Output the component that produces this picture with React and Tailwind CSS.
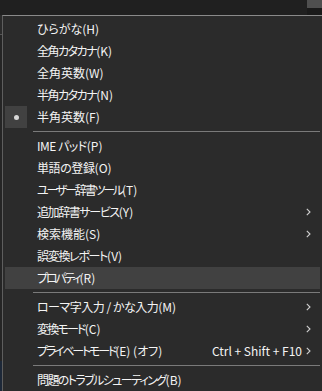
import React from "react";

const Chevron = () => (
  <svg width="5" height="8" viewBox="0 0 5 8" className="shrink-0">
    <polyline points="0.8,0.8 4,4 0.8,7.2" fill="none" stroke="#d0d0d0" strokeWidth="1.1" />
  </svg>
);

function Item({ label, sub, shortcut, active, checked, tight = "" }) {
  const i = label.indexOf("(");
  const head = label.slice(0, i);
  const tail = label.slice(i);
  return (
    <div className={"h-[22px] flex items-center relative " + (active ? "bg-[#414141]" : "")}>
      {checked && (
        <div className="absolute left-0 top-0 w-[22px] h-[22px] bg-[#414141] flex items-center justify-center">
          <div className="w-[5px] h-[5px] rounded-full bg-[#d8d8d8]" />
        </div>
      )}
      <span className="pl-[32px] flex-1 whitespace-nowrap">
        <span className={tight}>{head}</span>
        {tail}
      </span>
      {shortcut && <span className="mr-[4px] whitespace-nowrap">{shortcut}</span>}
      {sub && <Chevron />}
      <span className="w-[9px] shrink-0" />
    </div>
  );
}

const Sep = () => (
  <div className="h-[7px] flex items-center pl-[28px]">
    <div className="h-px w-full bg-[#7a7a7a]" />
  </div>
);

export default function App() {
  return (
    <div className="w-[322px] h-[391px] bg-[#202020] overflow-hidden flex flex-col font-['Noto_Sans_CJK_JP',sans-serif] text-[12px] text-[#f4f4f4] [font-feature-settings:'palt']">
      <div className="h-[15px] flex shrink-0">
        <div className="flex-1" />
        <div className="w-[15px] flex flex-col">
          <div className="h-[8px] bg-[#4f4f4f]" />
          <div className="flex-1 bg-[#1a1a1a]" />
        </div>
      </div>
      <div className="flex flex-1">
        <div className="w-[2px] flex flex-col">
          <div className="h-[19px] bg-[#2b2b2b]" />
          <div className="h-px bg-[#555]" />
          <div className="flex-1 bg-[#252525]" />
          <div className="h-[30px] bg-[#1d2838]" />
        </div>
        <div className="flex-1 bg-[#2b2b2b] border-l border-t border-l-[#5e5e5e] border-t-[#8a8a8a] pl-[2px] pr-[2px] pt-[2px]">
          <Item label="ひらがな(H)" />
          <Item label="全角カタカナ(K)" tight="tracking-[-1.5px]" />
          <Item label="全角英数(W)" />
          <Item label="半角カタカナ(N)" tight="tracking-[-1.5px]" />
          <Item label="半角英数(F)" checked />
          <Sep />
          <Item label="IME パッド(P)" tight="tracking-[-0.5px]" />
          <Item label="単語の登録(O)" tight="tracking-[-0.4px]" />
          <Item label="ユーザー辞書ツール(T)" tight="tracking-[-2.2px]" />
          <Item label="追加辞書サービス(Y)" sub tight="tracking-[-1.4px]" />
          <Item label="検索機能(S)" sub />
          <Item label="誤変換レポート(V)" tight="tracking-[-1.3px]" />
          <Item label="プロパティ(R)" active tight="tracking-[-2.2px]" />
          <Sep />
          <Item label="ローマ字入力 / かな入力(M)" sub tight="tracking-[-0.5px]" />
          <Item label="変換モード(C)" sub tight="tracking-[-1.8px]" />
          <Item label="プライベートモード(E) (オフ)" shortcut="Ctrl + Shift + F10" sub tight="tracking-[-2.2px]" />
          <Sep />
          <Item label="問題のトラブルシューティング(B)" tight="tracking-[-1.6px]" />
        </div>
      </div>
    </div>
  );
}
